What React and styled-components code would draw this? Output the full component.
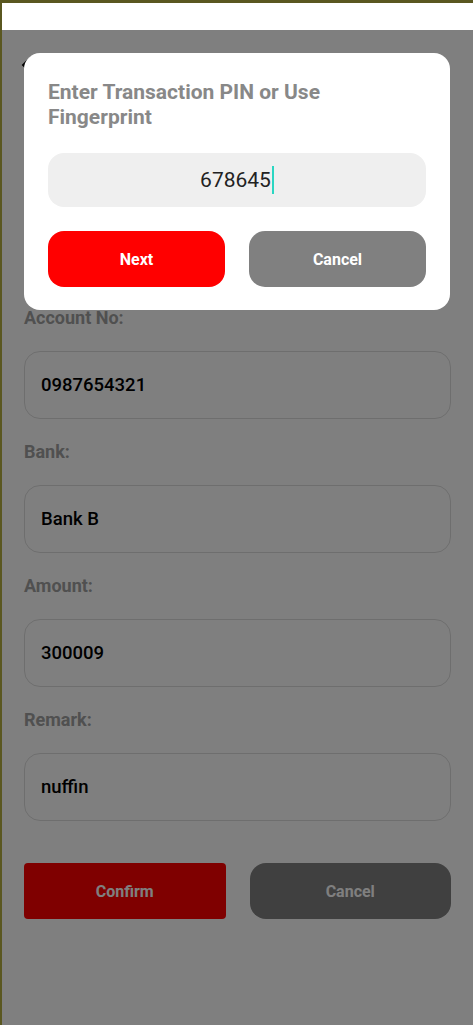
import React from 'react';
import styled, { createGlobalStyle } from 'styled-components';
import { MdArrowBack } from 'react-icons/md';

const GlobalStyle = createGlobalStyle`
  html, body {
    margin: 0;
    padding: 0;
    height: 100%;
  }
  body {
    font-family: Roboto, "Noto Sans", "Liberation Sans", sans-serif;
    background: #ffffff;
  }
  #root {
    height: 100%;
  }
`;

const Frame = styled.div`
  box-sizing: border-box;
  min-height: 100vh;
  display: flex;
  flex-direction: column;
  border-top: 3px solid #5a5720;
  border-left: 2px solid #5a5720;
  background: #ffffff;
`;

const StatusBar = styled.div`
  height: 27px;
  flex-shrink: 0;
`;

const Screen = styled.div`
  position: relative;
  flex: 1;
  padding: 21px 22px 0 22px;
`;

const Header = styled.div`
  display: flex;
  align-items: center;
  height: 28px;
`;

const BackButton = styled.div`
  margin-left: -7px;
  display: flex;
  color: #000000;
`;

const Form = styled.div`
  margin-top: 229px;
  display: flex;
  flex-direction: column;
  gap: 23px;
`;

const Group = styled.div`
  display: flex;
  flex-direction: column;
  gap: 23px;
`;

const Label = styled.div`
  font-size: 18px;
  line-height: 20px;
  font-weight: 700;
  color: #a0a0a0;
`;

const Field = styled.div`
  box-sizing: border-box;
  height: 68px;
  display: flex;
  align-items: center;
  padding: 0 16px;
  border: 1px solid #dddddd;
  border-radius: 16px;
  font-size: 18.5px;
  font-weight: 500;
  color: #000000;
`;

const ButtonRow = styled.div`
  margin-top: 42px;
  display: grid;
  grid-template-columns: 1fr 1fr;
  gap: 24px;
`;

const Button = styled.div`
  height: 56px;
  display: flex;
  align-items: center;
  justify-content: center;
  border-radius: ${(p) => p.radius}px;
  background: ${(p) => p.bg};
  color: #ffffff;
  font-size: 16px;
  font-weight: 700;
`;

const Overlay = styled.div`
  position: absolute;
  inset: 0;
  background: rgba(0, 0, 0, 0.5);
`;

const Modal = styled.div`
  position: absolute;
  top: 23px;
  left: 22px;
  width: 426px;
  box-sizing: border-box;
  padding: 27px 24px 23px;
  border-radius: 16px;
  background: #ffffff;
`;

const ModalTitle = styled.div`
  font-size: 21px;
  line-height: 25px;
  font-weight: 700;
  color: #888888;
`;

const PinBox = styled.div`
  margin-top: 23px;
  height: 54px;
  display: flex;
  align-items: center;
  justify-content: center;
  border-radius: 16px;
  background: #efefef;
  font-size: 21px;
  color: #222222;
`;

const Caret = styled.span`
  display: inline-block;
  width: 2px;
  height: 28px;
  margin-left: 1px;
  background: #2ad6c2;
`;

const ModalActions = styled.div`
  margin-top: 24px;
  display: grid;
  grid-template-columns: 1fr 1fr;
  gap: 24px;
`;

const fields = [
  { label: 'Account No:', value: '0987654321' },
  { label: 'Bank:', value: 'Bank B' },
  { label: 'Amount:', value: '300009' },
  { label: 'Remark:', value: 'nuffin' },
];

const App = () => (
  <>
    <GlobalStyle />
    <Frame>
      <StatusBar />
      <Screen>
        <Header>
          <BackButton>
            <MdArrowBack size={28} />
          </BackButton>
        </Header>
        <Form>
          {fields.map((f) => (
            <Group key={f.label}>
              <Label>{f.label}</Label>
              <Field>{f.value}</Field>
            </Group>
          ))}
        </Form>
        <ButtonRow>
          <Button bg="#ff0000" radius={4}>Confirm</Button>
          <Button bg="#808080" radius={16}>Cancel</Button>
        </ButtonRow>

        <Overlay />
        <Modal>
          <ModalTitle>
            Enter Transaction PIN or Use
            <br />
            Fingerprint
          </ModalTitle>
          <PinBox>
            678645
            <Caret />
          </PinBox>
          <ModalActions>
            <Button bg="#ff0000" radius={16}>Next</Button>
            <Button bg="#808080" radius={16}>Cancel</Button>
          </ModalActions>
        </Modal>
      </Screen>
    </Frame>
  </>
);

export default App;
